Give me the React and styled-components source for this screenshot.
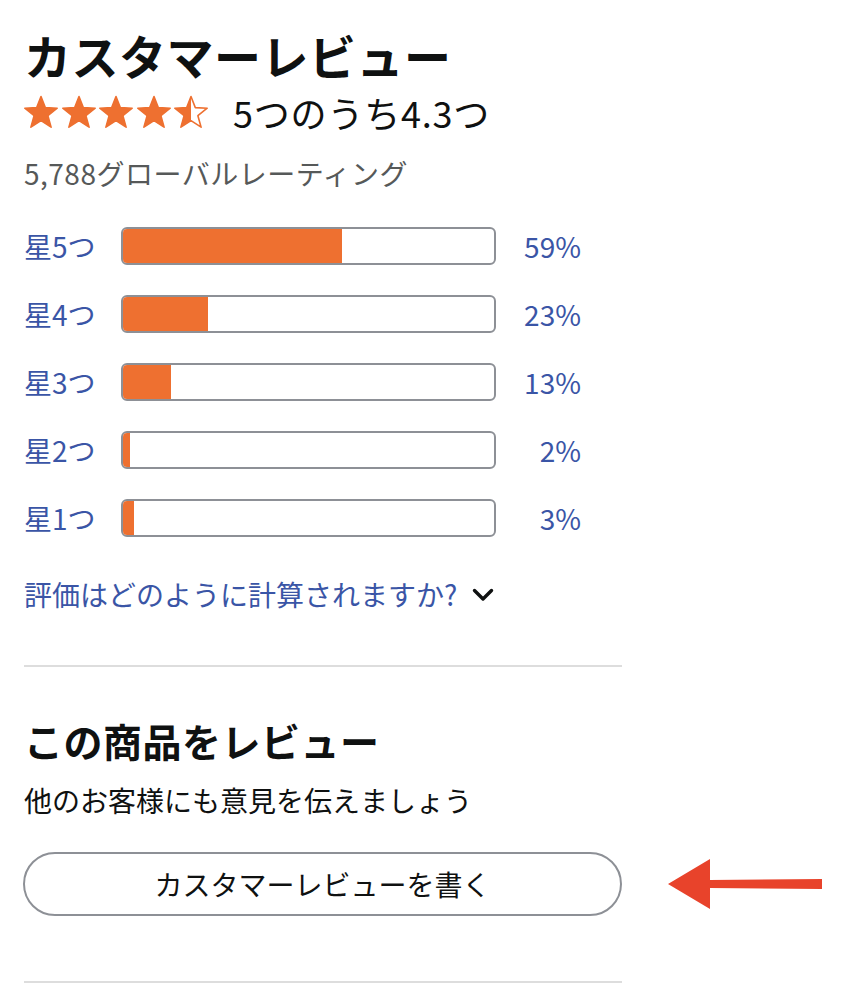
import React from "react";
import styled, { createGlobalStyle } from "styled-components";

const GlobalStyle = createGlobalStyle`
  html, body {
    margin: 0;
    padding: 0;
    background: #ffffff;
  }
  body {
    font-family: "Noto Sans CJK JP", "Noto Sans", sans-serif;
    color: #0f1111;
  }
`;

const ratings = [
  { label: "星5つ", pct: 59 },
  { label: "星4つ", pct: 23 },
  { label: "星3つ", pct: 13 },
  { label: "星2つ", pct: 2 },
  { label: "星1つ", pct: 3 },
];

const STAR =
  "M18 1.5 L22.3 12.6 L34.2 13.2 L24.9 20.7 L28.1 32.2 L18 25.7 L7.9 32.2 L11.1 20.7 L1.8 13.2 L13.7 12.6 Z";

const Star = ({ fill = 1, id }) => (
  <svg width="36" height="34" viewBox="0 0 36 34">
    <defs>
      <clipPath id={id}>
        <rect x="0" y="0" width={36 * fill} height="34" />
      </clipPath>
    </defs>
    <path d={STAR} fill="none" stroke="#ee7030" strokeWidth="1.6" strokeLinejoin="round" />
    <path d={STAR} fill="#ee7030" clipPath={`url(#${id})`} />
  </svg>
);

const Chevron = () => (
  <ChevronIcon width="22" height="14" viewBox="0 0 22 14">
    <polyline
      points="2.5,2.5 11,11 19.5,2.5"
      fill="none"
      stroke="#0f1111"
      strokeWidth="3.4"
      strokeLinecap="round"
      strokeLinejoin="round"
    />
  </ChevronIcon>
);

const App = () => {
  return (
    <Page>
      <GlobalStyle />
      <Title>カスタマーレビュー</Title>
      <StarRow>
        <Stars>
          {[1, 1, 1, 1, 0.5].map((f, i) => (
            <Star key={i} fill={f} id={`star-${i}`} />
          ))}
        </Stars>
        <RatingText>5つのうち4.3つ</RatingText>
      </StarRow>
      <Count>5,788グローバルレーティング</Count>

      <Bars>
        {ratings.map((r) => (
          <BarRow key={r.label}>
            <BarLabel>{r.label}</BarLabel>
            <Track>
              <Fill style={{ width: `${r.pct}%` }} />
            </Track>
            <Percent>{r.pct}%</Percent>
          </BarRow>
        ))}
      </Bars>

      <HowLink>
        評価はどのように計算されますか?
        <Chevron />
      </HowLink>

      <Divider />

      <SubTitle>この商品をレビュー</SubTitle>
      <SubText>他のお客様にも意見を伝えましょう</SubText>

      <ButtonRow>
        <WriteButton>カスタマーレビューを書く</WriteButton>
        <Arrow width="156" height="52" viewBox="0 0 156 52">
          <polygon points="0,26 42,1 42,22 154,21 154,31 42,30 42,51" fill="#e8432b" />
        </Arrow>
      </ButtonRow>

      <BottomDivider />
    </Page>
  );
};

export default App;

const Page = styled.div`
  padding: 25px 24px 20px;
  width: 844px;
  box-sizing: border-box;
`;

const Title = styled.h1`
  margin: 0;
  font-size: 47px;
  line-height: 60px;
  font-weight: 700;
  letter-spacing: 0.5px;
  color: #0f1111;
`;

const StarRow = styled.div`
  display: flex;
  align-items: center;
  height: 54px;
`;

const Stars = styled.div`
  display: flex;
  gap: 1.5px;
  margin-left: -1px;

  svg {
    display: block;
  }
`;

const RatingText = styled.span`
  margin-left: 24px;
  font-size: 36px;
  line-height: 44px;
  letter-spacing: 0.8px;
  color: #0f1111;
`;

const Count = styled.div`
  margin-top: 14px;
  font-size: 28px;
  line-height: 40px;
  letter-spacing: 0.5px;
  color: #565959;
`;

const Bars = styled.div`
  margin-top: 19px;
  display: flex;
  flex-direction: column;
`;

const BarRow = styled.div`
  display: grid;
  grid-template-columns: 97px 375px 85px;
  align-items: center;
  height: 68px;
`;

const BarLabel = styled.span`
  font-size: 28px;
  line-height: 40px;
  color: #3a55a6;
`;

const Track = styled.div`
  height: 38px;
  box-sizing: border-box;
  border: 2px solid #8d9096;
  border-radius: 6px;
  overflow: hidden;
  background: #ffffff;
`;

const Fill = styled.div`
  height: 100%;
  background: #ee7030;
`;

const Percent = styled.span`
  text-align: right;
  font-size: 28px;
  line-height: 40px;
  color: #3a55a6;
`;

const HowLink = styled.div`
  margin-top: 22px;
  display: flex;
  align-items: center;
  gap: 15px;
  font-size: 28px;
  line-height: 40px;
  color: #3a55a6;
`;

const ChevronIcon = styled.svg`
  display: block;
  margin-top: 2px;
`;

const Divider = styled.hr`
  margin: 51px 0 0;
  width: 598px;
  border: none;
  height: 2px;
  background: #dddddd;
`;

const SubTitle = styled.h2`
  margin: 48px 0 0;
  font-size: 39px;
  line-height: 50px;
  font-weight: 700;
  letter-spacing: 0.5px;
  color: #0f1111;
`;

const SubText = styled.p`
  margin: 15px 0 0;
  font-size: 28px;
  line-height: 40px;
  color: #0f1111;
`;

const ButtonRow = styled.div`
  margin-top: 32px;
  display: flex;
  align-items: center;
`;

const WriteButton = styled.button`
  flex-shrink: 0;
  width: 599px;
  height: 64px;
  box-sizing: border-box;
  margin-left: -1px;
  border: 2px solid #8d9096;
  border-radius: 32px;
  background: #ffffff;
  font-family: "Noto Sans CJK JP", "Noto Sans", sans-serif;
  font-size: 28px;
  color: #0f1111;
  cursor: pointer;
`;

const Arrow = styled.svg`
  flex-shrink: 0;
  margin-left: 46px;
  display: block;
`;

const BottomDivider = styled(Divider)`
  margin-top: 65px;
`;
